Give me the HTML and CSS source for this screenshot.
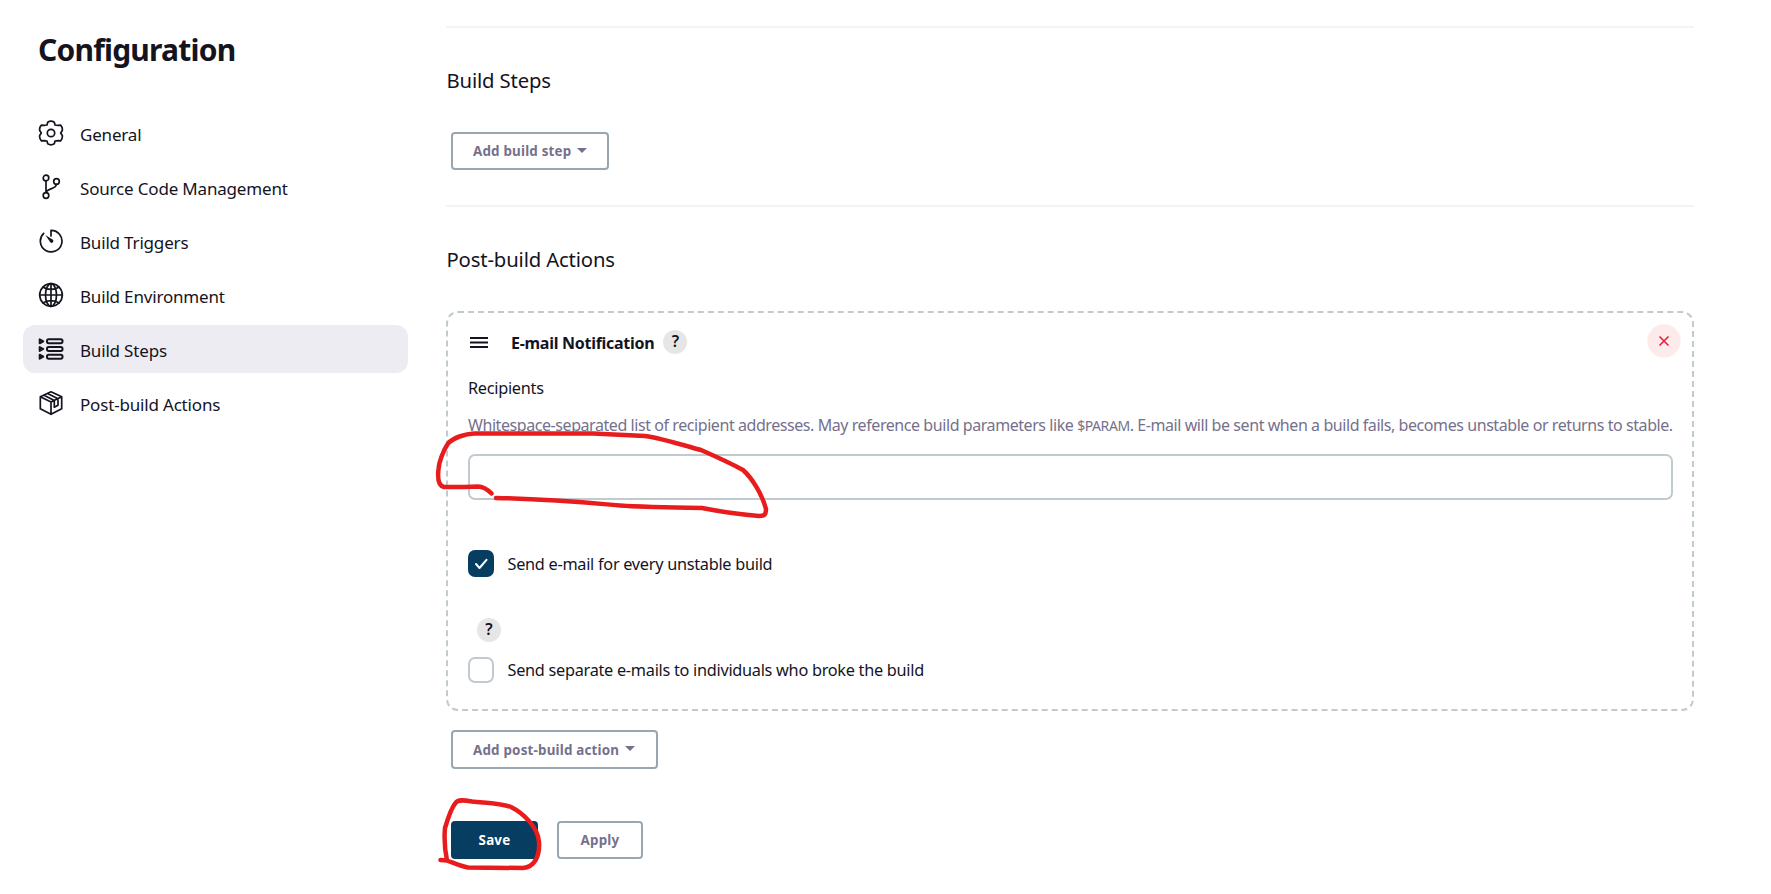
FILE: index.html
```html
<!DOCTYPE html>
<html lang="en">
<head>
<meta charset="utf-8">
<title>Configuration</title>
<link rel="stylesheet" href="styles.css">
</head>
<body>
<aside class="sidebar">
  <h1 class="title">Configuration</h1>
  <nav class="nav">
    <a class="nav-item"><svg class="icon" viewBox="0 0 26 26"><path d="M9.7 2.2Q13 .2 16.300 2.200L17 5Q18.600 5.200 20 5.400L22.600 5.200Q24.800 7.500 24.300 10.500L22.700 13L24.300 15.500Q24.800 18.500 22.600 20.800L20 20.600Q18.600 20.800 17 21L16.300 23.800Q13 25.800 9.700 23.800L9 21Q7.400 20.800 6 20.600L3.400 20.800Q1.200 18.500 1.700 15.500L3.300 13L1.700 10.500Q1.200 7.500 3.400 5.200L6 5.400Q7.400 5.200 9 5Z"/><circle cx="13" cy="13" r="3.700"/></svg><span>General</span></a>
    <a class="nav-item"><svg class="icon" viewBox="0 0 26 26"><circle cx="8" cy="4" r="2.800"/><circle cx="18.500" cy="7.500" r="2.800"/><circle cx="8" cy="21.500" r="2.800"/><path d="M8 6.800v11.900M18.300 10.300c-.3 5.700-9.500 3.500-10.300 8.400"/></svg><span>Source Code Management</span></a>
    <a class="nav-item"><svg class="icon" viewBox="0 0 26 26"><path d="M13 8V2.300A10.800 10.800 0 1 1 5.700 5.300"/><path class="solid" d="M7.300 7l7.600 4.800a1.700 1.700 0 1 1-2.600 2.400z"/></svg><span>Build Triggers</span></a>
    <a class="nav-item"><svg class="icon" viewBox="0 0 26 26"><circle cx="13" cy="13" r="11.300"/><ellipse cx="13" cy="13" rx="5.500" ry="11.300"/><path d="M13 1.700v22.600M1.700 13h22.600M5 5c4 3.200 12 3.200 16 0M5 21c4-3.200 12-3.200 16 0"/></svg><span>Build Environment</span></a>
    <a class="nav-item active"><svg class="icon steps" viewBox="0 0 26 26"><rect x="9" y="3.300" width="15.500" height="4" rx="1.700"/><rect x="9" y="11" width="15.500" height="4" rx="1.700"/><rect x="9" y="18.700" width="15.500" height="4" rx="1.700"/><path d="M1.700 3.300v4l3.600-2zM1.700 11v4l3.600-2zM1.700 18.700v4l3.600-2z"/></svg><span>Build Steps</span></a>
    <a class="nav-item"><svg class="icon" viewBox="0 0 26 26"><path d="M13 1.800l10.700 5v12L13 24.300 2.300 18.800v-12zM2.300 6.800L13 12l10.700-5.200M13 12v12.300M9.600 3.500L20 8.700M6 5.200l10.300 5.200v6.800l3.700-2V8.700"/></svg><span>Post-build Actions</span></a>
  </nav>
</aside>
<main class="main">
  <section class="section">
    <h2 class="heading">Build Steps</h2>
    <button class="btn"><span>Add build step</span><i class="caret"></i></button>
  </section>
  <section class="section last">
    <h2 class="heading">Post-build Actions</h2>
    <div class="card">
      <div class="card-head">
        <svg class="grip" viewBox="0 0 18 11"><path d="M0 1h18M0 5.500h18M0 10h18"/></svg>
        <b class="card-title">E-mail Notification</b>
        <span class="help">?</span>
        <svg class="close" viewBox="0 0 34 34"><circle cx="17" cy="17" r="16.700"/><path d="M12.500 12.500l9 9M21.500 12.500l-9 9"/></svg>
      </div>
      <label class="label">Recipients</label>
      <p class="desc">Whitespace-separated list of recipient addresses. May reference build parameters like <code>$PARAM</code>. E-mail will be sent when a build fails, becomes unstable or returns to stable.</p>
      <input class="field" type="text">
      <div class="check-row"><span class="check on"><svg viewBox="0 0 26 27"><path d="M8 14l3.500 4L18.500 9.800"/></svg></span><span>Send e-mail for every unstable build</span></div>
      <span class="help below">?</span>
      <div class="check-row second"><span class="check"></span><span>Send separate e-mails to individuals who broke the build</span></div>
    </div>
    <button class="btn tall"><span>Add post-build action</span><i class="caret"></i></button>
    <div class="actions"><button class="btn primary">Save</button><button class="btn apply">Apply</button></div>
  </section>
</main>
<svg class="marks" viewBox="0 0 1771 894">
  <path d="M491.500 493.500C487 489 483 486.500 478 486.500C467 487 456 487 444 487C438.500 486 437.500 478 438.500 469C439 462 443 451 448 443.500C454 437 466 434 474 433.500L593 433.500L645 436C660 438 683 445 701 450C717 457 732 464 743 470C752 478 762 494 766 509C766 515 764 516 759 516C745 515 728 513 702 508C670 507.500 642 507 620 505.500C580 502 550 499 496 498"/>
  <path d="M440.500 860L447 860.500C445 851 444 839 445 828C448 818 452 807 455.500 803C458 799 464 800 472 801.500C486 803 499 802.500 511 807C523 813 538 827 539 842C540 857 534 867 523 868L468 867.500C460 866 454 863 447 860.500"/>
</svg>
</body>
</html>
```
FILE: styles.css
```css
* { box-sizing: border-box; }
body {
  margin: 0;
  width: 1771px;
  height: 894px;
  display: flex;
  overflow: hidden;
  background: #fff;
  color: #14141f;
  font: 16.3px/24px "Noto Sans", "Open Sans", sans-serif;
  letter-spacing: -.28px;
}
.sidebar { width: 446px; padding: 30px 38px 0 23px; }
.title { margin: 0 0 39px 15px; font-size: 30px; line-height: 40px; font-weight: 700; letter-spacing: -.78px; }
.nav { display: flex; flex-direction: column; gap: 6px; font-size: 17px; letter-spacing: -.18px; }
.nav-item { display: flex; align-items: center; height: 48px; padding: 0 15px; border-radius: 12px; }
.nav-item > span { margin: 3px 0 0 16px; white-space: nowrap; }
.active { background: #edecf2; }
.icon { width: 26px; height: 26px; margin-top: -1px; fill: none; stroke: #14141f; stroke-width: 1.7; stroke-linejoin: round; stroke-linecap: round; }
.steps { stroke-width: 2; }
.solid { fill: #14141f; stroke: none; }
.main { width: 1248px; padding-top: 26px; }
.section { height: 179px; border-top: 2px solid #f3f3f8; padding-top: 38px; }
.section.last { height: auto; }
.heading { margin: 0 0 38px; padding-left: .5px; font-size: 20.3px; line-height: 28px; font-weight: 400; letter-spacing: -.15px; }
.btn { display: flex; align-items: center; height: 38px; width: 158px; margin: 0 0 0 5px; padding: 0 0 0 20px; border: 2px solid #98a7af; border-radius: 4px; background: #fff; color: #75718c; font: 700 13.4px/20px "Noto Sans", sans-serif; letter-spacing: .19px; white-space: nowrap; }
.caret { margin: -2px 0 0 6px; border: 5px solid transparent; border-top-color: #75718c; border-bottom: 0; }
.card { height: 400px; border: 2px dashed #c1cbcf; border-radius: 12px; padding: 12px 19px 0 20px; }
.card-head { display: flex; align-items: center; height: 34px; margin-right: -8px; }
.grip { width: 18px; height: 11px; margin: 0 23px 0 2px; fill: none; stroke: #14141f; stroke-width: 1.8; }
.card-title { padding-top: 2px; font-size: 16px; letter-spacing: -.28px; }
.help { display: block; width: 24px; height: 24px; border-radius: 50%; background: #e6e6e6; font-weight: 600; font-size: 16px; line-height: 23px; letter-spacing: 0; text-align: center; }
.card-head .help { margin-left: 9px; }
.close { width: 34px; height: 34px; margin: -2px 0 0 auto; fill: #fdebec; stroke: none; }
.close path { stroke: #e6203c; stroke-width: 1.6; }
.label { display: block; margin-top: 17px; }
.desc { margin: 13px 0 17px; color: #75718c; font-size: 16px; letter-spacing: -.43px; white-space: nowrap; }
.desc code { font: 14px "Noto Sans", sans-serif; }
.field { display: block; width: 1205px; height: 46px; border: 2px solid #c1cbcf; border-radius: 7px; background: #fff; }
.check-row { display: flex; align-items: center; height: 27px; margin-top: 50px; white-space: nowrap; }
.check { width: 26px; height: 26px; margin-right: 13.5px; border: 2px solid #c1cbcf; border-radius: 7px; }
.check.on { height: 27px; border: 0; background: #063d60; }
.check svg { display: block; fill: none; stroke: #fff; stroke-width: 2; stroke-linecap: round; stroke-linejoin: round; }
.help.below { margin: 41px 0 0 9px; }
.second { margin-top: 14px; }
.btn.tall { width: 207px; height: 39px; margin-top: 19px; }
.actions { display: flex; margin-top: 52px; }
.btn.primary { width: 87px; justify-content: center; padding: 0; background: #063d60; border-color: #063d60; color: #fff; }
.btn.apply { width: 86px; margin-left: 19px; padding: 0; justify-content: center; }
.marks { position: absolute; left: 0; top: 0; width: 1771px; height: 894px; fill: none; stroke: #e81c1c; stroke-width: 4.5; stroke-linecap: round; stroke-linejoin: round; pointer-events: none; }
```
